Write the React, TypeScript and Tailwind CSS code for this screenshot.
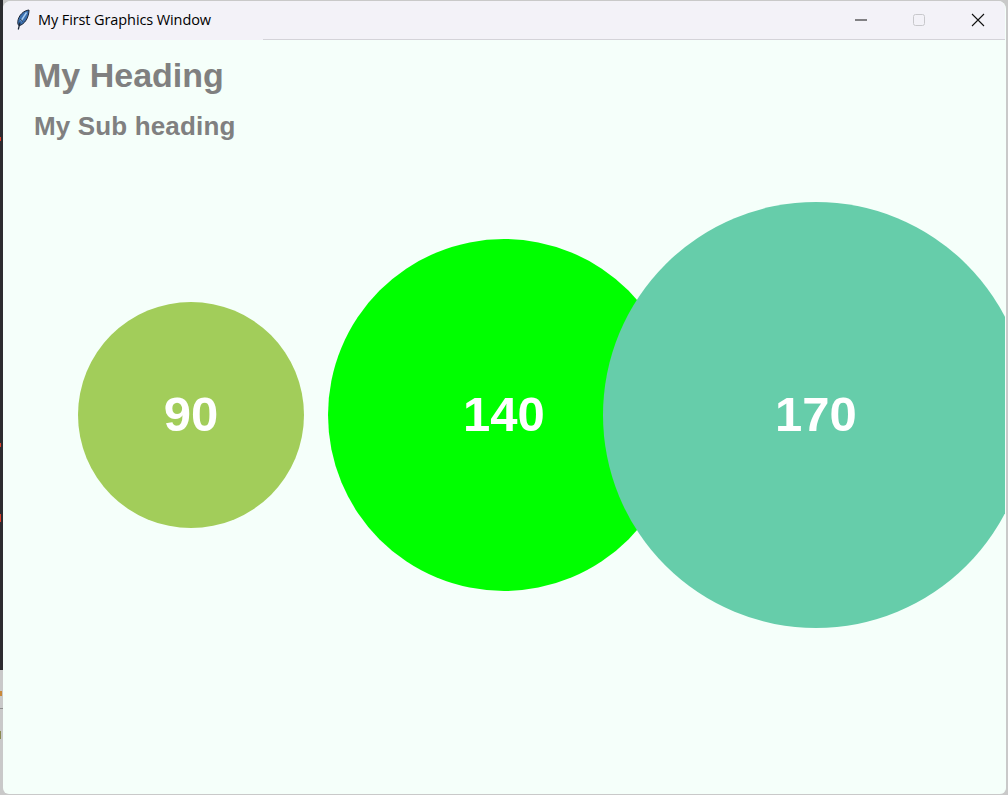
export default function App() {
  const font = { fontFamily: '"Liberation Sans", Arial, sans-serif' };
  const circle = "flex shrink-0 items-center justify-center rounded-full pb-[1px] text-[49px] font-bold text-white";
  return (
    <div className="relative h-[795px] w-[1008px] overflow-hidden bg-[#c9c9c9]">
      <div className="absolute left-0 top-0 h-[670px] w-[3px] bg-[#2c2c30]" />
      <div className="absolute left-0 top-[137px] h-[4px] w-[1px] bg-[#d8402a]" />
      <div className="absolute left-0 top-[443px] h-[4px] w-[1px] bg-[#d8402a]" />
      <div className="absolute left-0 top-[514px] h-[8px] w-[1px] bg-[#d8402a]" />
      <div className="absolute left-0 top-[691px] h-[5px] w-[2px] bg-[#c98a3a]" />
      <div className="absolute left-0 top-[708px] h-[1px] w-[3px] bg-[#8f8f8f]" />
      <div className="absolute left-0 top-[731px] h-[8px] w-[1px] bg-[#8a8a50]" />
      <div className="absolute left-[3px] top-[1px] flex h-[793px] w-[1003px] flex-col overflow-hidden rounded-t-[8px] rounded-b-[6px] border-r border-r-[#f5fffa] bg-[#f5fffa]">
        <div className="flex h-[38px] shrink-0 items-center bg-[#f3f2f8] pl-[12px]">
          <svg width="16" height="22" viewBox="0 0 16 22" className="shrink-0">
            <path d="M14 1C8.5 1.5 3.5 6.5 2.8 12.5c-.2 2 .3 3.3 1.2 4.2C9.5 15.5 14 8.5 14 1Z" fill="#3a6fae" stroke="#1b2536" strokeWidth="1" />
            <path d="M11.5 3.5 6 12" stroke="#a9cdf0" strokeWidth="1.4" />
            <path d="M7.5 12.5 5.5 10" stroke="#16202f" strokeWidth="0.8" />
            <path d="M5 13.5 3.3 20.5" stroke="#1b2536" strokeWidth="1.2" />
          </svg>
          <span className="ml-[7px] text-[14.5px] leading-none text-black" style={{ fontFamily: '"Open Sans", "Noto Sans", sans-serif', letterSpacing: '-0.1px' }}>
            My First Graphics Window
          </span>
          <div className="ml-auto flex items-center">
            <svg width="12" height="2" viewBox="0 0 12 2" className="mr-[46px]"><path d="M0 1h12" stroke="#111" strokeWidth="1" /></svg>
            <svg width="12" height="12" viewBox="0 0 12 12" className="mr-[46px]"><rect x=".5" y=".5" width="11" height="11" rx="2" fill="none" stroke="#c8c8cc" /></svg>
            <svg width="14" height="14" viewBox="0 0 14 14" className="mr-[20px]"><path d="M1 1l12 12M13 1 1 13" stroke="#111" strokeWidth="1.1" /></svg>
          </div>
        </div>
        <div className="relative flex flex-1 flex-col border-t border-t-[#d4d3d9] pl-[30px] pt-[15px]">
          <div className="absolute left-0 top-[-1px] h-[1px] w-[260px] bg-[#f3f2f8]" />
          <div className="text-[34px] font-bold leading-[40px] text-[#808080]" style={font}>My Heading</div>
          <div className="ml-[1px] mt-[15px] text-[26px] font-bold leading-[32px] tracking-[0.15px] text-[#808080]" style={font}>My Sub heading</div>
          <div className="ml-[45px] mt-[60px] flex w-[1000px] items-center" style={font}>
            <div className={`${circle} h-[226px] w-[226px] bg-[#a2cd5a]`}>90</div>
            <div className={`${circle} ml-[24px] h-[352px] w-[352px] bg-[#00ff00]`}>140</div>
            <div className={`${circle} ml-[-77px] h-[426px] w-[426px] bg-[#66cdaa]`}>170</div>
          </div>
        </div>
      </div>
    </div>
  );
}
